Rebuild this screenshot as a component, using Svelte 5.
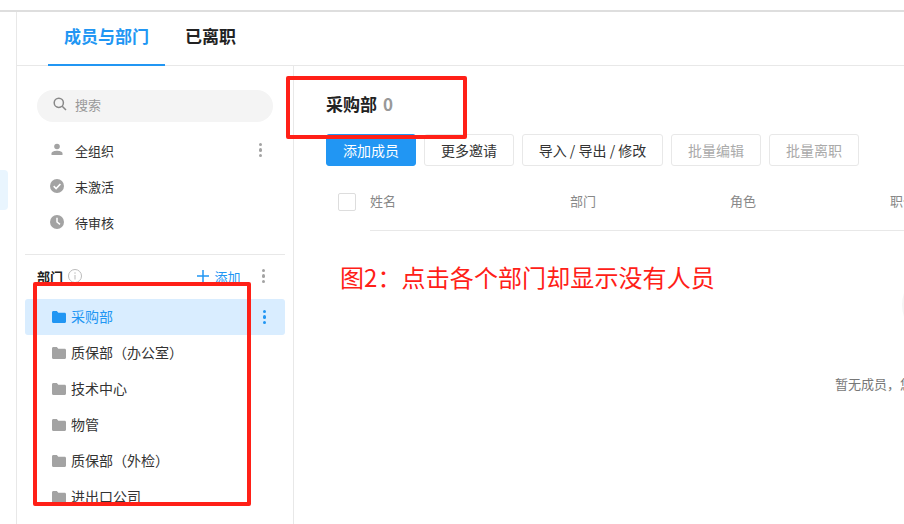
<script>
    const toolbar = [
        { label: '添加成员', kind: 'primary', width: 90 },
        { label: '更多邀请', kind: '', width: 90 },
        { label: '导入 / 导出 / 修改', kind: '', width: 141 },
        { label: '批量编辑', kind: 'off', width: 90 },
        { label: '批量离职', kind: 'off', width: 90 }
    ];

    const depts = ['采购部', '质保部（办公室）', '技术中心', '物管', '质保部（外检）', '进出口公司'];
</script>

<div class="page">
    <div class="topline"></div>
    <div class="body">
        <div class="rail"><div class="rail-mark"></div></div>
        <div class="content">
            <div class="tabs">
                <div class="tab active">成员与部门</div>
                <div class="tab">已离职</div>
            </div>
            <div class="columns">
                <aside class="side">
                    <div class="search">
                        <svg width="16" height="16" viewBox="0 0 16 16" fill="none" stroke="#888" stroke-width="1.5">
                            <circle cx="6.8" cy="6.8" r="4.6" />
                            <path d="M10.2 10.2 14 14" />
                        </svg>
                        <span>搜索</span>
                    </div>
                    <div class="nav">
                        <div class="nav-row">
                            <svg width="16" height="16" viewBox="0 0 16 16" fill="#a3a3a3">
                                <circle cx="8" cy="4.5" r="2.8" />
                                <path d="M2.5 13v-1.5C2.5 9.6 5.5 8.8 8 8.8s5.500.8 5.5 2.700V13z" />
                            </svg>
                            <span>全组织</span>
                            <i class="dots"><b></b><b></b><b></b></i>
                        </div>
                        <div class="nav-row">
                            <svg width="16" height="16" viewBox="0 0 16 16">
                                <circle cx="8" cy="8" r="7" fill="#a3a3a3" />
                                <path d="M4.700 8.200 7.100 10.500 11.400 6" fill="none" stroke="#fff" stroke-width="1.600" />
                            </svg>
                            <span>未激活</span>
                        </div>
                        <div class="nav-row">
                            <svg width="16" height="16" viewBox="0 0 16 16">
                                <circle cx="8" cy="8" r="7" fill="#a3a3a3" />
                                <path d="M8 3.800V8l3 2.300" fill="none" stroke="#fff" stroke-width="1.500" />
                            </svg>
                            <span>待审核</span>
                        </div>
                    </div>
                    <div class="dept-head">
                        <span class="dept-title">部门</span>
                        <svg class="info" width="14" height="14" viewBox="0 0 14 14" fill="none" stroke="#bbb">
                            <circle cx="7" cy="7" r="6.500" />
                            <path d="M7 6v4.500M7 3.300v1.500" />
                        </svg>
                        <span class="add">
                            <svg width="12" height="12" viewBox="0 0 12 12" fill="none" stroke="#2196f3" stroke-width="1.500">
                                <path d="M6 0v12M0 6h12" />
                            </svg>
                            添加
                        </span>
                        <i class="dots"><b></b><b></b><b></b></i>
                    </div>
                    <div class="dept-list">
                        {#each depts as d, i}
                            <div class="dept" class:current={i === 0}>
                                <svg width="14" height="12" viewBox="0 0 14 12">
                                    <path d="M0 1.500C0 .7.600 0 1.400 0h3.400l1.500 1.800h6.300c.8 0 1.400.6 1.400 1.400v7.300c0 .8-.6 1.500-1.400 1.500H1.400C.6 12 0 11.300 0 10.500z" />
                                </svg>
                                <span>{d}</span>
                                {#if i === 0}
                                    <i class="dots"><b></b><b></b><b></b></i>
                                {/if}
                            </div>
                        {/each}
                    </div>
                </aside>
                <main class="main">
                    <div class="title">采购部<span class="count">0</span></div>
                    <div class="toolbar">
                        {#each toolbar as b}
                            <div class="btn {b.kind}" style="width: {b.width}px">{b.label}</div>
                        {/each}
                    </div>
                    <div class="thead">
                        <div class="check"></div>
                        <div class="cols">
                            <span class="c-name">姓名</span>
                            <span class="c-dept">部门</span>
                            <span class="c-role">角色</span>
                            <span>职位</span>
                        </div>
                    </div>
                    <div class="empty-art"></div>
                    <div class="empty">暂无成员，您可以添加成员</div>
                </main>
            </div>
        </div>
    </div>

    <!-- annotations drawn on top of the screenshot -->
    <div class="mark mark-title"></div>
    <div class="mark mark-list"></div>
    <div class="note">图2：点击各个部门却显示没有人员</div>
</div>

<style>
    :global(body) {
        margin: 0;
        background: #fff;
    }
    .page {
        position: relative;
        width: 904px;
        height: 524px;
        overflow: hidden;
        font-family: "Noto Sans CJK SC", "Liberation Sans", sans-serif;
        font-size: 13px;
        color: #333;
    }
    .topline {
        height: 10px;
        border-bottom: 2px solid #dedede;
    }
    .body {
        display: flex;
        height: 512px;
    }
    .rail {
        width: 16px;
        flex: none;
        border-right: 1px solid #e8e8e8;
        padding-top: 158px;
    }
    .rail-mark {
        width: 8px;
        height: 40px;
        background: #e9f5fe;
        border-radius: 0 4px 4px 0;
    }
    .content {
        flex: 1;
        min-width: 0;
    }
    .tabs {
        display: flex;
        height: 53px;
        padding-left: 31px;
        border-bottom: 1px solid #e8e8e8;
    }
    .tab {
        padding: 0 16px;
        line-height: 48px;
        font-size: 17px;
        font-weight: 700;
        color: #222;
    }
    .tab.active {
        color: #2196f3;
        border-bottom: 2px solid #2196f3;
        height: 52px;
        margin-right: 4px;
    }
    .columns {
        display: flex;
        height: 458px;
    }
    .side {
        width: 277px;
        flex: none;
        box-sizing: border-box;
        border-right: 1px solid #e8e8e8;
        padding: 24px 8px 0;
    }
    .search {
        display: flex;
        align-items: center;
        gap: 7px;
        box-sizing: border-box;
        height: 32px;
        margin: 0 12px;
        padding: 0 0 4px 15px;
        border-radius: 16px;
        background: #f4f4f4;
        color: #999;
    }
    .nav {
        margin-top: 10px;
        padding-bottom: 14px;
        border-bottom: 1px solid #e8e8e8;
    }
    .nav-row {
        display: flex;
        align-items: center;
        gap: 10px;
        height: 36px;
        padding: 0 23px 0 24px;
    }
    .nav-row span {
        flex: 1;
    }
    .dots {
        display: flex;
        flex-direction: column;
        gap: 2px;
    }
    .dots b {
        width: 3.500px;
        height: 3.500px;
        border-radius: 50%;
        background: #a3a3a3;
    }
    .dept-head {
        display: flex;
        align-items: center;
        box-sizing: border-box;
        height: 44px;
        padding: 0 20px 2px 12px;
    }
    .dept-title {
        font-weight: 700;
        color: #222;
    }
    .info {
        margin-left: 5px;
    }
    .add {
        display: flex;
        align-items: center;
        gap: 5px;
        margin-left: auto;
        margin-right: 21px;
        color: #2196f3;
    }
    .dept {
        display: flex;
        align-items: center;
        gap: 5px;
        height: 36px;
        padding: 0 19px 0 27px;
        font-size: 14px;
        line-height: 20px;
        fill: #a3a3a3;
        border-radius: 3px;
    }
    .dept span {
        flex: 1;
        padding-bottom: 2px;
    }
    .dept.current {
        background: #d9edff;
        color: #2196f3;
        fill: #2196f3;
    }
    .dept.current .dots b {
        background: #2196f3;
    }
    .main {
        flex: 1;
        min-width: 0;
        padding: 25px 0 0 32px;
        overflow: hidden;
    }
    .title {
        height: 28px;
        font-size: 17px;
        font-weight: 700;
        line-height: 26px;
        color: #222;
    }
    .count {
        margin-left: 6px;
        color: #999;
    }
    .toolbar {
        display: flex;
        gap: 8px;
        margin-top: 15px;
    }
    .btn {
        flex: none;
        box-sizing: border-box;
        height: 32px;
        font-size: 14px;
        line-height: 30px;
        text-align: center;
        border: 1px solid #e8e8e8;
        border-radius: 3px;
        white-space: nowrap;
    }
    .btn.primary {
        background: #2196f3;
        border-color: #2196f3;
        color: #fff;
    }
    .btn.off {
        color: #aaa;
    }
    .thead {
        display: flex;
        width: 600px;
        margin: 18px 0 0 12px;
    }
    .check {
        box-sizing: border-box;
        width: 18px;
        height: 18px;
        margin-top: 9px;
        border: 1px solid #ddd;
        border-radius: 2px;
    }
    .cols {
        display: flex;
        flex: 1;
        height: 46px;
        margin-left: 14px;
        line-height: 34px;
        border-bottom: 1px solid #e8e8e8;
        color: #888;
    }
    .c-name {
        width: 200px;
    }
    .c-dept {
        width: 160px;
    }
    .c-role {
        width: 160px;
    }
    .empty-art {
        width: 74px;
        height: 74px;
        margin: 37px 0 0 576px;
        border-radius: 50%;
        background: #f5f5f5;
    }
    .empty {
        margin: 32px 0 0 509px;
        width: 300px;
        color: #777;
        white-space: nowrap;
    }
    .mark {
        position: absolute;
        box-sizing: border-box;
        border: 4px solid #ff2017;
        border-radius: 2px;
    }
    .mark-title {
        left: 286px;
        top: 76px;
        width: 181px;
        height: 63px;
    }
    .mark-list {
        left: 33px;
        top: 282px;
        width: 218px;
        height: 224px;
    }
    .note {
        position: absolute;
        left: 340px;
        top: 261px;
        font-size: 24px;
        line-height: 32px;
        letter-spacing: 0.1px;
        color: #ff2017;
    }
</style>
